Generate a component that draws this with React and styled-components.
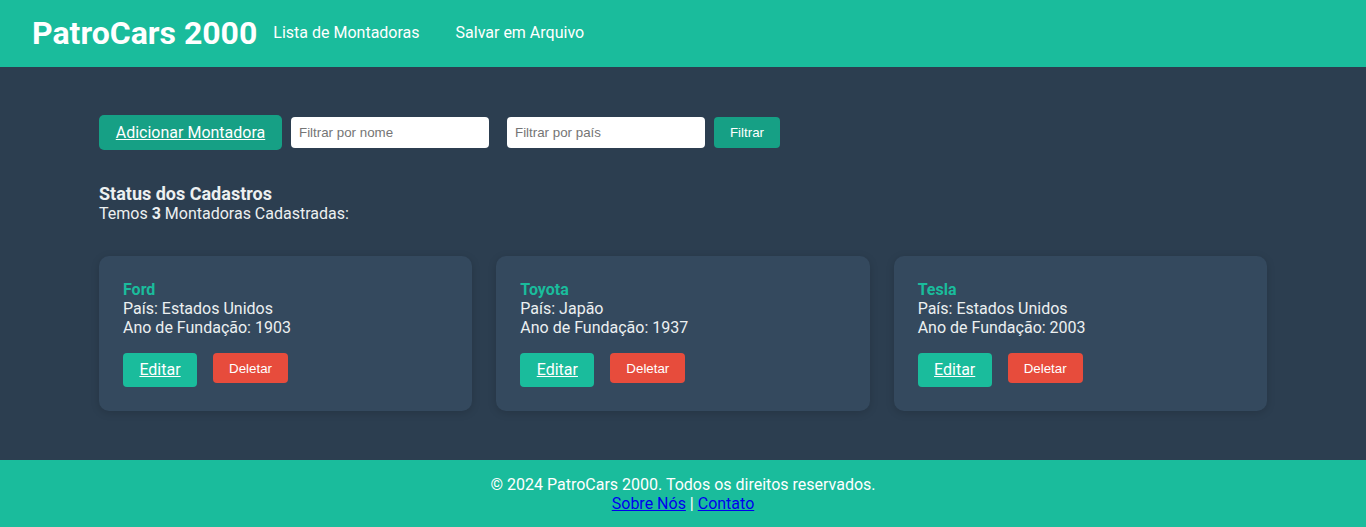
import React from "react";
import styled, { createGlobalStyle } from "styled-components";

const GlobalStyle = createGlobalStyle`
  body {
    margin: 0;
    font-family: Roboto, "Liberation Sans", sans-serif;
    background-color: #2c3e50;
  }
`;

const montadoras = [
  { id: 1, nome: "Ford", pais: "Estados Unidos", ano: 1903 },
  { id: 2, nome: "Toyota", pais: "Japão", ano: 1937 },
  { id: 3, nome: "Tesla", pais: "Estados Unidos", ano: 2003 },
];

const App = () => {
  return (
    <>
      <GlobalStyle />
      <Header>
        <Logo>PatroCars 2000</Logo>
        <Nav>
          <NavLink href="#">Lista de Montadoras</NavLink>
          <NavLink href="#">Salvar em Arquivo</NavLink>
        </Nav>
      </Header>
      <Main>
        <Controls>
          <AddButton href="#">Adicionar Montadora</AddButton>
          <FilterInput type="text" placeholder="Filtrar por nome" />
          <FilterInput type="text" placeholder="Filtrar por país" $wide />
          <FilterButton>Filtrar</FilterButton>
        </Controls>
        <Status>
          <StatusTitle>Status dos Cadastros</StatusTitle>
          <StatusText>
            Temos <b>{montadoras.length}</b> Montadoras Cadastradas:
          </StatusText>
        </Status>
        <CardGrid>
          {montadoras.map((m) => (
            <Card key={m.id}>
              <CardTitle>{m.nome}</CardTitle>
              <CardLine>País: {m.pais}</CardLine>
              <CardLine>Ano de Fundação: {m.ano}</CardLine>
              <CardActions>
                <EditButton href="#">Editar</EditButton>
                <DeleteButton>Deletar</DeleteButton>
              </CardActions>
            </Card>
          ))}
        </CardGrid>
      </Main>
      <Footer>
        <FooterText>© 2024 PatroCars 2000. Todos os direitos reservados.</FooterText>
        <FooterText>
          <FooterLink href="#">Sobre Nós</FooterLink> | <FooterLink href="#">Contato</FooterLink>
        </FooterText>
      </Footer>
    </>
  );
};

const Header = styled.header`
  box-sizing: border-box;
  display: flex;
  align-items: center;
  height: 67px;
  padding: 0 32px 2px;
  background-color: #1abc9c;
  color: #fff;
`;

const Logo = styled.h1`
  margin: 0 16px 0 0;
  font-size: 32px;
  font-weight: 700;
  line-height: 1;
`;

const Nav = styled.nav`
  display: flex;
  gap: 36px;
`;

const NavLink = styled.a`
  color: #fff;
  text-decoration: none;
  font-size: 16px;
  line-height: 19px;
`;

const Main = styled.main`
  padding: 48px 99px 49px;
`;

const Controls = styled.div`
  display: flex;
  align-items: center;
  gap: 9px;
`;

const AddButton = styled.a`
  display: inline-block;
  box-sizing: border-box;
  width: 183px;
  height: 35px;
  padding: 8px 0;
  border-radius: 5px;
  background-color: #16a085;
  color: #fff;
  font-size: 16px;
  line-height: 19px;
  text-align: center;
`;

const FilterInput = styled.input`
  box-sizing: border-box;
  width: 198px;
  height: 31px;
  margin-left: ${(p) => (p.$wide ? "9px" : "0")};
  padding: 0 8px;
  border: none;
  border-radius: 4px;
  background: #fff;
  font-family: "Liberation Sans", Arial, sans-serif;
  font-size: 13.33px;
  outline: none;

  &::placeholder {
    color: #757575;
  }
`;

const FilterButton = styled.button`
  box-sizing: border-box;
  width: 66px;
  height: 31px;
  border: none;
  border-radius: 4px;
  background-color: #16a085;
  color: #fff;
  font-family: "Liberation Sans", Arial, sans-serif;
  font-size: 13.33px;
  cursor: pointer;
`;

const Status = styled.div`
  margin-top: 33px;
  color: #ecf0f1;
`;

const StatusTitle = styled.h2`
  margin: 0;
  font-size: 18px;
  font-weight: 700;
  line-height: 21px;
`;

const StatusText = styled.p`
  margin: 0;
  font-size: 16px;
  line-height: 19px;
`;

const CardGrid = styled.div`
  display: grid;
  grid-template-columns: repeat(3, 1fr);
  gap: 24px;
  margin-top: 33px;
`;

const Card = styled.div`
  padding: 24px;
  border-radius: 10px;
  background-color: #34495e;
  box-shadow: 0 2px 8px rgba(0, 0, 0, 0.15);
  color: #ecf0f1;
`;

const CardTitle = styled.h3`
  margin: 0;
  color: #1abc9c;
  font-size: 16px;
  font-weight: 700;
  line-height: 19px;
`;

const CardLine = styled.p`
  margin: 0;
  font-size: 16px;
  line-height: 19px;
`;

const CardActions = styled.div`
  display: flex;
  align-items: flex-start;
  gap: 16px;
  margin-top: 16px;
`;

const EditButton = styled.a`
  display: inline-block;
  box-sizing: border-box;
  width: 74px;
  height: 34px;
  padding: 8px 0;
  border-radius: 4px;
  background-color: #1abc9c;
  color: #fff;
  font-size: 16px;
  line-height: 18px;
  text-align: center;
`;

const DeleteButton = styled.button`
  box-sizing: border-box;
  width: 75px;
  height: 30px;
  border: none;
  border-radius: 4px;
  background-color: #e74c3c;
  color: #fff;
  font-family: "Liberation Sans", Arial, sans-serif;
  font-size: 13.33px;
  cursor: pointer;
`;

const Footer = styled.footer`
  padding: 15px 0 14px;
  background-color: #1abc9c;
  color: #fff;
  text-align: center;
`;

const FooterText = styled.p`
  margin: 0;
  font-size: 16px;
  line-height: 19px;
`;

const FooterLink = styled.a`
  color: #0000ee;
`;

export default App;
